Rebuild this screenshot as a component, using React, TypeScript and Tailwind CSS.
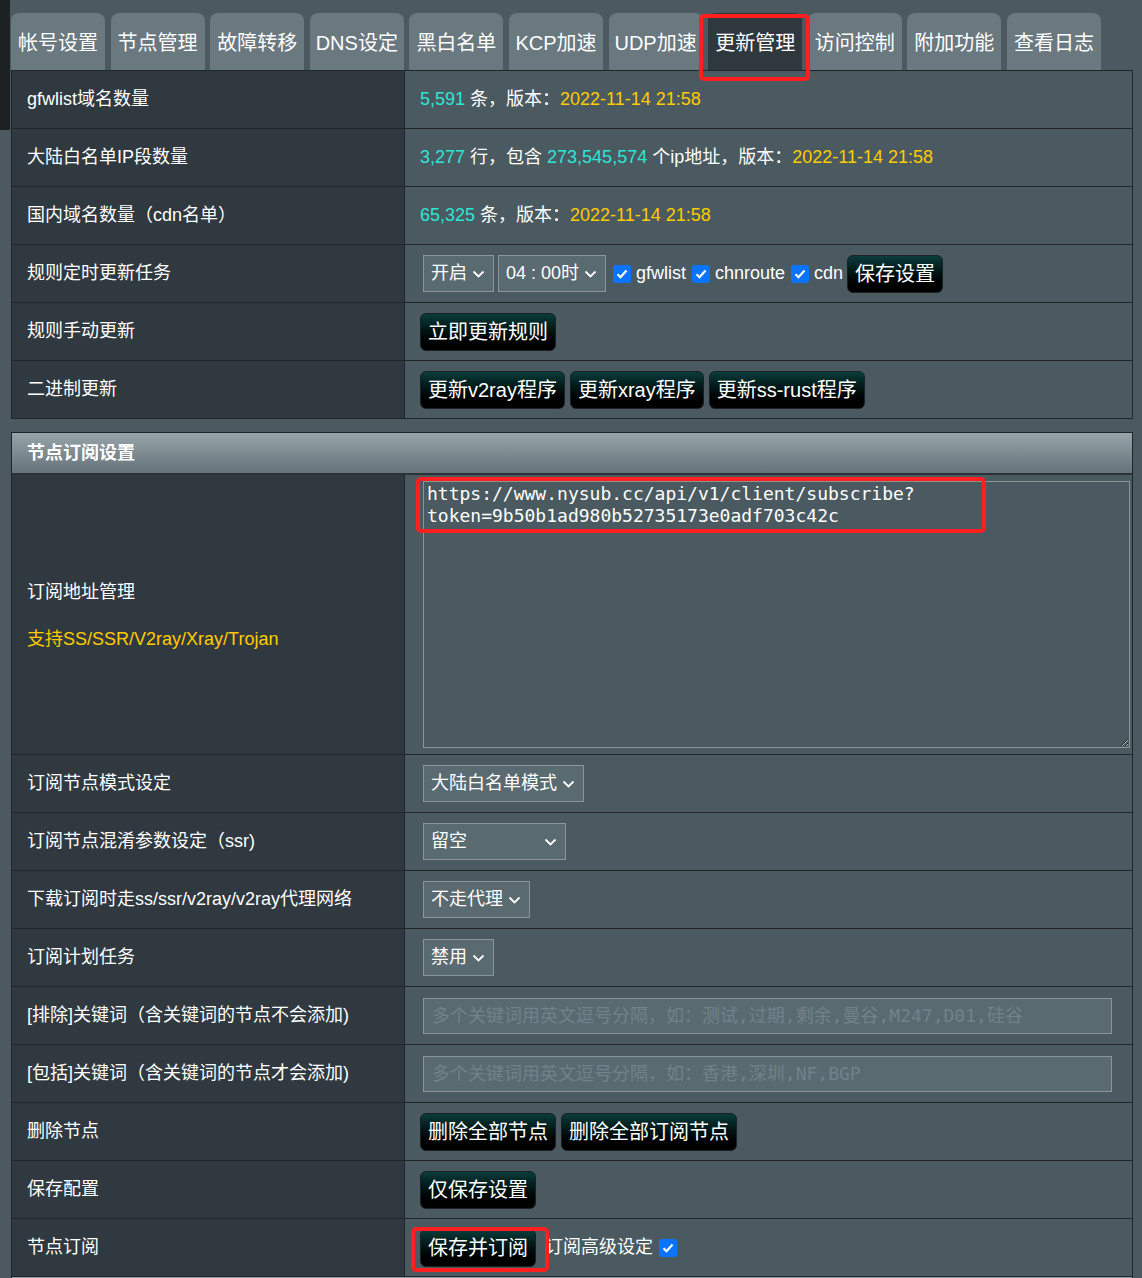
import React from "react";

const tabs = ["帐号设置", "节点管理", "故障转移", "DNS设定", "黑白名单", "KCP加速", "UDP加速", "更新管理", "访问控制", "附加功能", "查看日志"];

const Chevron = () => (
  <svg width="13" height="8" viewBox="0 0 13 8" className="shrink-0">
    <polyline points="1.5,1.5 6.5,6.5 11.5,1.5" fill="none" stroke="white" strokeWidth="1.8" />
  </svg>
);

const Select = ({ text, w }: { text: string; w: string }) => (
  <div className={`${w} h-[37px] flex items-center justify-between pl-[7px] pr-[8px] bg-[#5a6a71] border border-[#8b9599] text-white text-[18px]`}>
    <span>{text}</span>
    <Chevron />
  </div>
);

const Check = () => (
  <span className="w-[18px] h-[18px] rounded-[3px] bg-[#0b74ff] flex items-center justify-center shrink-0">
    <svg width="12" height="10" viewBox="0 0 12 10">
      <polyline points="1.5,5.2 4.5,8.2 10.5,1.5" fill="none" stroke="white" strokeWidth="2.2" />
    </svg>
  </span>
);

const Btn = ({ children }: { children: React.ReactNode }) => (
  <button className="h-[38px] px-[7px] rounded-md border border-[#1a2022] bg-linear-to-b from-[#0b3d3c] to-[#000000] text-white text-[20px] leading-none whitespace-nowrap">
    {children}
  </button>
);

const Row = ({ label, children }: { label: React.ReactNode; children?: React.ReactNode }) => (
  <div className="flex h-[58px] border-b border-[#1f2629]">
    <div className="w-[393px] shrink-0 bg-[#2f393f] border-r border-[#1f2629] flex items-center pl-[15px] text-[18px] text-white">
      {label}
    </div>
    <div className="flex-1 bg-[#4a5a60] flex items-center pl-[15px] gap-[5px] text-[18px] text-white">{children}</div>
  </div>
);

const Cyan = ({ children }: { children: React.ReactNode }) => <span className="text-[#2fe6d6]">{children}</span>;
const Yellow = ({ children }: { children: React.ReactNode }) => <span className="text-[#ffcc00]">{children}</span>;

const App = () => {
  return (
    <div className="relative w-[1142px] h-[1278px] overflow-hidden bg-[#4d5960] font-['Liberation_Sans','Noto_Sans_CJK_SC',sans-serif]">
      <div className="absolute left-0 top-0 w-[10px] h-[130px] bg-[#1d2123]" />
      <div className="pt-[13px] pl-[11px]">
        {/* tabs */}
        <div className="flex gap-[5.6px]">
          {tabs.map((t) => (
            <div
              key={t}
              className={`w-[94px] h-[57px] rounded-t-lg flex items-center justify-center pt-[2px] text-[20px] text-white whitespace-nowrap ${
                t === "更新管理" ? "bg-[#2e383e]" : "bg-[#6a7880]"
              }`}
            >
              {t}
            </div>
          ))}
        </div>

        {/* rule section */}
        <div className="w-[1122px] border-x border-t border-[#1f2629]">
          <Row label="gfwlist域名数量">
            <span>
              <Cyan>5,591</Cyan> 条，版本：<Yellow>2022-11-14 21:58</Yellow>
            </span>
          </Row>
          <Row label="大陆白名单IP段数量">
            <span>
              <Cyan>3,277</Cyan> 行，包含 <Cyan>273,545,574</Cyan> 个ip地址，版本：<Yellow>2022-11-14 21:58</Yellow>
            </span>
          </Row>
          <Row label="国内域名数量（cdn名单）">
            <span>
              <Cyan>65,325</Cyan> 条，版本：<Yellow>2022-11-14 21:58</Yellow>
            </span>
          </Row>
          <Row label="规则定时更新任务">
            <div className="flex items-center gap-[4px] ml-[3px]">
              <Select text="开启" w="w-[71px]" />
              <Select text="04 : 00时" w="w-[108px]" />
              <div className="flex items-center gap-[5px] ml-[3px]">
                <Check />
                <span>gfwlist</span>
              </div>
              <div className="flex items-center gap-[5px] ml-[2px]">
                <Check />
                <span>chnroute</span>
              </div>
              <div className="flex items-center gap-[5px] ml-[2px]">
                <Check />
                <span>cdn</span>
              </div>
              <Btn>保存设置</Btn>
            </div>
          </Row>
          <Row label="规则手动更新">
            <Btn>立即更新规则</Btn>
          </Row>
          <Row label="二进制更新">
            <Btn>更新v2ray程序</Btn>
            <Btn>更新xray程序</Btn>
            <Btn>更新ss-rust程序</Btn>
          </Row>
        </div>

        {/* subscribe section */}
        <div className="w-[1122px] mt-[13px] border-x border-t border-[#1f2629]">
          <div className="h-[42px] flex items-center pl-[15px] border-b-2 border-[#2a3236] bg-linear-to-b from-[#97a4aa] to-[#66737a] text-white text-[18px] font-bold">
            节点订阅设置
          </div>
          <div className="flex h-[280px] border-b border-[#1f2629]">
            <div className="w-[393px] shrink-0 bg-[#2f393f] border-r border-[#1f2629] flex flex-col justify-center gap-[20px] pl-[15px] pt-[2px] text-[18px] text-white">
              <span>订阅地址管理</span>
              <span className="text-[#ffcc00]">支持SS/SSR/V2ray/Xray/Trojan</span>
            </div>
            <div className="flex-1 bg-[#4a5a60] pl-[18px] pr-[2px] pt-[6px]">
              <textarea
                readOnly
                defaultValue="https://www.nysub.cc/api/v1/client/subscribe?token=9b50b1ad980b52735173e0adf703c42c"
                className="w-full h-[267px] bg-[#4a5a60] border border-[#8b9497] px-[3px] py-[1px] text-white text-[18px] leading-[22px] font-['DejaVu_Sans_Mono',monospace] outline-none"
              />
            </div>
          </div>
          <Row label="订阅节点模式设定">
            <div className="ml-[3px]">
              <Select text="大陆白名单模式" w="w-[161px]" />
            </div>
          </Row>
          <Row label="订阅节点混淆参数设定（ssr)">
            <div className="ml-[3px]">
              <Select text="留空" w="w-[143px]" />
            </div>
          </Row>
          <Row label="下载订阅时走ss/ssr/v2ray/v2ray代理网络">
            <div className="ml-[3px]">
              <Select text="不走代理" w="w-[107px]" />
            </div>
          </Row>
          <Row label="订阅计划任务">
            <div className="ml-[3px]">
              <Select text="禁用" w="w-[71px]" />
            </div>
          </Row>
          <Row label="[排除]关键词（含关键词的节点不会添加)">
            <div className="ml-[3px] w-[689px] h-[36px] bg-[#5a6a71] border border-[#8b9599] flex items-center pl-[8px] text-[18px] text-[#72828a] font-['DejaVu_Sans_Mono','Noto_Sans_CJK_SC',monospace]">
              多个关键词用英文逗号分隔，如：测试,过期,剩余,曼谷,M247,D01,硅谷
            </div>
          </Row>
          <Row label="[包括]关键词（含关键词的节点才会添加)">
            <div className="ml-[3px] w-[689px] h-[36px] bg-[#5a6a71] border border-[#8b9599] flex items-center pl-[8px] text-[18px] text-[#72828a] font-['DejaVu_Sans_Mono','Noto_Sans_CJK_SC',monospace]">
              多个关键词用英文逗号分隔，如：香港,深圳,NF,BGP
            </div>
          </Row>
          <Row label="删除节点">
            <Btn>删除全部节点</Btn>
            <Btn>删除全部订阅节点</Btn>
          </Row>
          <Row label="保存配置">
            <Btn>仅保存设置</Btn>
          </Row>
          <Row label="节点订阅">
            <div className="flex items-center gap-[9px]">
              <Btn>保存并订阅</Btn>
              <span className="flex items-center gap-[6px]">
                订阅高级设定
                <Check />
              </span>
            </div>
          </Row>
          <div className="h-[4px] bg-[#8e9aa0]" />
        </div>
      </div>

      {/* red annotation boxes */}
      <div className="absolute left-[699px] top-[14px] w-[111px] h-[67px] border-4 border-[#ff1f1f] rounded-[5px]" />
      <div className="absolute left-[416px] top-[477px] w-[570px] h-[56px] border-4 border-[#ff1f1f] rounded-[5px]" />
      <div className="absolute left-[411px] top-[1227px] w-[138px] h-[45px] border-4 border-[#ff1f1f] rounded-[5px]" />
    </div>
  );
};

export default App;
